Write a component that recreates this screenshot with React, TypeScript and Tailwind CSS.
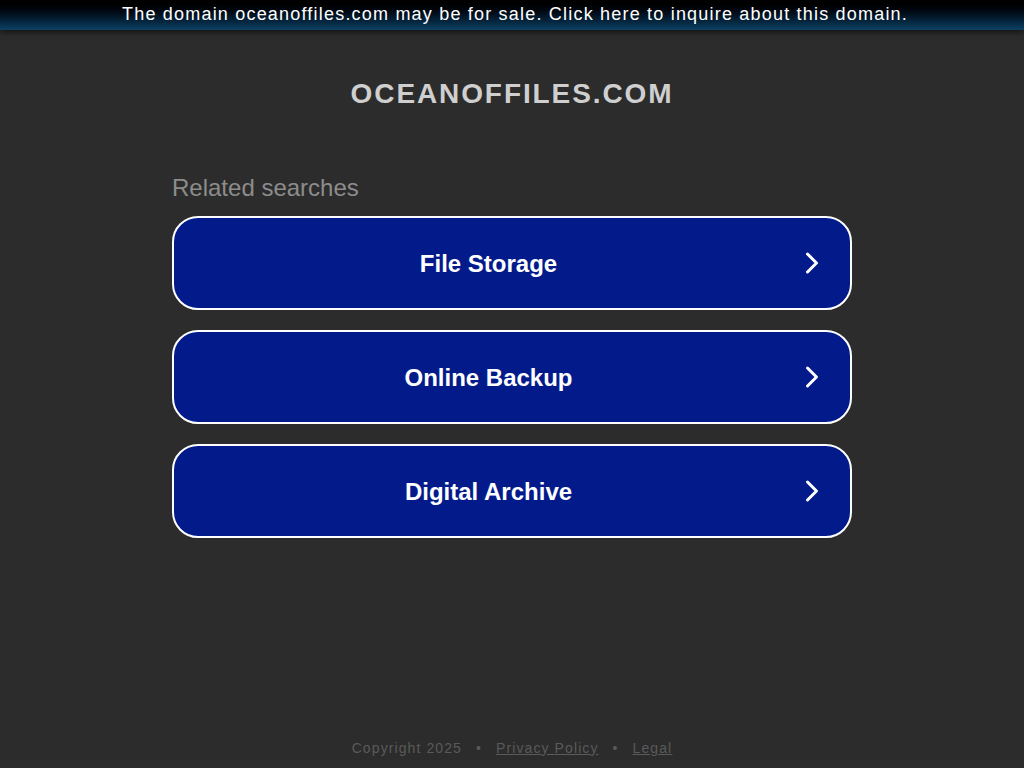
import { ChevronRight } from 'lucide-react';

const searches = ['File Storage', 'Online Backup', 'Digital Archive'];

export default function App() {
  return (
    <div className="min-h-screen bg-[#2c2c2c] flex flex-col font-['Liberation_Sans',Arial,sans-serif]">
      <div className="h-[30px] bg-gradient-to-b from-[#000000] to-[#0d4166] shadow-[0_2px_6px_rgba(0,0,0,0.6)] flex items-center justify-center pb-[2px] pl-[6px]">
        <a className="text-[18px] text-white tracking-[1.2px] leading-none cursor-pointer">
          The domain oceanoffiles.com may be for sale. Click here to inquire about this domain.
        </a>
      </div>

      <div className="flex flex-col items-center">
        <h1 className="mt-[48px] text-[28px] font-bold text-[#cfcfcf] tracking-[1.9px] leading-8">
          OCEANOFFILES.COM
        </h1>

        <div className="w-[680px] mt-[64px]">
          <div className="text-[24px] text-[#8c8c8c] leading-7">Related searches</div>
          <div className="mt-[14px] flex flex-col gap-5">
            {searches.map((s) => (
              <a
                key={s}
                className="h-[94px] rounded-[26px] border-2 border-white bg-[#031a8a] flex items-center pl-[9px] pr-[20px] cursor-pointer"
              >
                <span className="flex-1 text-center text-[24px] font-bold text-white pt-[2px]">{s}</span>
                <ChevronRight className="text-white" size={36} strokeWidth={2} />
              </a>
            ))}
          </div>
        </div>
      </div>

      <div className="mt-auto h-[40px] flex items-center justify-center gap-[14px] text-[14px] text-[#5a5a5a] tracking-[1.1px]">
        <span>Copyright 2025</span>
        <span>•</span>
        <a className="underline cursor-pointer">Privacy Policy</a>
        <span>•</span>
        <a className="underline cursor-pointer">Legal</a>
      </div>
    </div>
  );
}
